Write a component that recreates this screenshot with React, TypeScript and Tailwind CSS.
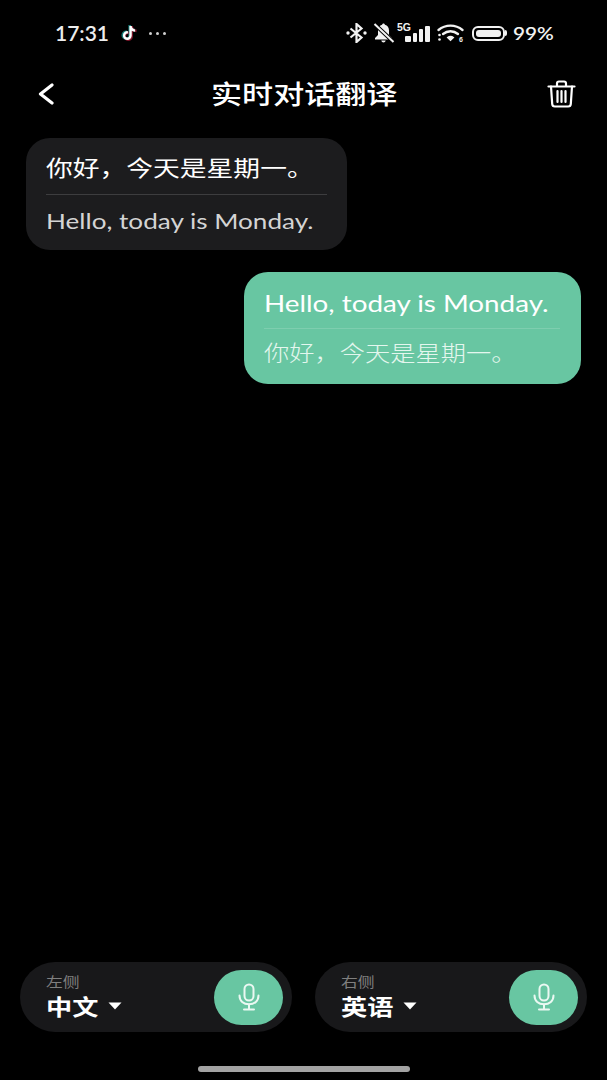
import React from "react";
import { FaTiktok } from "react-icons/fa";

function Stretch({ className, children }: { className: string; children: React.ReactNode }) {
  return <span className={`block origin-left whitespace-nowrap ${className}`}>{children}</span>;
}

function Bubble({ dark, first, second }: { dark: boolean; first: string; second: string }) {
  const zhDark = "font-['Noto_Sans_CJK_SC',sans-serif] text-[21.5px] scale-x-[1.245] leading-[26px]";
  const enDark = "font-['Lato',sans-serif] text-[22px] scale-x-[1.187] leading-[26px]";
  const zhLight = "font-['Noto_Sans_CJK_SC',sans-serif] font-light text-[21.5px] scale-x-[1.175] leading-[26px]";
  const enLight = "font-['Lato',sans-serif] text-[23px] scale-x-[1.208] leading-[26px]";
  return (
    <div
      className={
        dark
          ? "w-[321px] h-[112px] rounded-[24px] bg-[#1c1c1e] pl-[20px] pr-[20px] flex flex-col self-start ml-[26px]"
          : "w-[337px] h-[112px] rounded-[24px] bg-[#68c6a2] pl-[20px] pr-[21px] flex flex-col self-end mr-[26px]"
      }
    >
      <div className={`h-[57px] flex items-center border-b border-[#ffffff26] ${dark ? "pt-[2px]" : "pt-[5px]"}`}>
        <Stretch className={`${dark ? zhDark : enLight} text-white`}>{first}</Stretch>
      </div>
      <div className={`flex-1 flex items-center ${dark ? "pb-[3px]" : "pb-[9px]"}`}>
        <Stretch className={`${dark ? enDark : zhLight} ${dark ? "text-[#d4d4d4]" : "text-[#e4f6ee]"}`}>{second}</Stretch>
      </div>
    </div>
  );
}

function Mic() {
  return (
    <svg width="24" height="28" viewBox="0 0 24 28" preserveAspectRatio="none" fill="none" stroke="#eaf8f2" strokeWidth="2" strokeLinecap="round" strokeLinejoin="round">
      <rect x="7.500" y="1.500" width="9" height="16" rx="4.500" />
      <path d="M2.500 12.500c0 5.500 4 8.800 9.500 8.800s9.500-3.300 9.500-8.800" />
      <path d="M12 21.500v5M7 26.500h10" />
    </svg>
  );
}

function Pill({ label, value }: { label: string; value: string }) {
  return (
    <div className="w-[272px] h-[70px] rounded-full bg-[#18181a] flex items-center pl-[26px] pr-[9px]">
      <div className="flex-1 flex flex-col pb-[3px] font-['Noto_Sans_CJK_SC',sans-serif]">
        <Stretch className="text-[14px] leading-[18px] scale-x-[1.2] text-[#7f7f7f]">{label}</Stretch>
        <div className="flex items-center h-[30px]">
          <Stretch className="w-[62px] text-[22px] leading-[28px] scale-x-[1.19] font-bold text-white">{value}</Stretch>
          <svg width="14" height="8" viewBox="0 0 14 8" className="mt-[3px]"><path d="M0.500 0.500h13L7 7.500z" fill="#fff" /></svg>
        </div>
      </div>
      <div className="w-[69px] h-[55px] rounded-full bg-[#68c6a2] flex items-center justify-center">
        <Mic />
      </div>
    </div>
  );
}

function StatusIcons() {
  return (
    <div className="flex items-center text-[#f2f2f2]">
      <svg width="21" height="20" viewBox="0 0 21 20" fill="none" stroke="currentColor" strokeWidth="2.200" className="mr-[6px]">
        <path d="M4.500 5.500l11 9-5 4.500V1l5 4.500-11 9" />
        <circle cx="2" cy="10" r="1.700" fill="currentColor" stroke="none" />
        <circle cx="19" cy="10" r="1.700" fill="currentColor" stroke="none" />
      </svg>
      <svg width="22" height="20" viewBox="0 0 22 20" className="mr-[2px]">
        <path d="M10.500 .500c-.8 0-1.300.6-1.400 1.300C6.500 2.500 5 4.800 5 7.500V12L2 15v1.500h17V15l-3-3V7.500c0-2.700-1.500-5-4.100-5.700C11.800 1.100 11.300 .500 10.500 .500zM8.300 17.500c.2 1.200 1.200 2 2.200 2s2-.8 2.200-2z" fill="currentColor" />
        <path d="M1.500 1L20.500 19" stroke="#000" strokeWidth="4" />
        <path d="M1.500 1L20.500 19" stroke="currentColor" strokeWidth="2" />
      </svg>
      <div className="relative w-[34px] h-[18px] mr-[6px]">
        <span className="absolute left-0 top-[-2px] text-[10.5px] leading-[10px] font-bold font-['Liberation_Sans',sans-serif]">5G</span>
        <div className="absolute left-[8px] bottom-0 flex items-end gap-[2px]">
          <span className="w-[6px] h-[6px] bg-current rounded-[1px]" />
          <span className="w-[4px] h-[9px] bg-current rounded-[1px]" />
          <span className="w-[4px] h-[13px] bg-current rounded-[1px]" />
          <span className="w-[5px] h-[16px] bg-current rounded-[1px]" />
        </div>
      </div>
      <svg width="28" height="18" viewBox="0 0 28 18" fill="none" stroke="currentColor" strokeLinecap="round" className="mr-[7px]">
        <path d="M1.500 6C8.500 .2 18.500 .2 25.500 6" strokeWidth="2.300" />
        <path d="M6 10c4.500-3.700 10.500-3.700 15 0" strokeWidth="2.300" />
        <path d="M10.500 13.500c2-1.500 4-1.500 6 0l-3 3z" fill="currentColor" strokeWidth="1.200" />
        <circle cx="2.500" cy="11" r="1.300" fill="currentColor" stroke="none" />
        <circle cx="2.500" cy="15.500" r="1.300" fill="currentColor" stroke="none" />
        <text x="22" y="17.500" fontSize="7" fontWeight="700" fill="currentColor" stroke="none" fontFamily="Liberation Sans">6</text>
      </svg>
      <div className="relative w-[33px] h-[15px] rounded-[6px] border-2 border-current p-[2px] mr-[8px]">
        <div className="w-full h-full rounded-[3px] bg-current" />
        <span className="absolute right-[-4px] top-[2.500px] w-[2px] h-[6px] rounded-r bg-current" />
      </div>
      <span className="w-[40px] font-['Lato',sans-serif] font-semibold text-[18px] leading-[22px] scale-x-[1.15] origin-left">99%</span>
    </div>
  );
}

export default function App() {
  return (
    <div className="w-[607px] h-[1080px] bg-black overflow-hidden flex flex-col text-white">
      <div className="h-[66px] flex items-center justify-between pl-[55px] pr-[54px]">
        <div className="flex items-center">
          <span className="w-[66px] font-['Lato',sans-serif] font-semibold text-[21px] leading-[26px] text-[#ededed]">17:31</span>
          <span className="relative w-[16px] h-[14px] mr-[12px]">
            <FaTiktok className="absolute left-[-1px] top-[-1px] w-[16px] h-[15px] text-[#25f4ee] opacity-50" />
            <FaTiktok className="absolute left-[1px] top-0 w-[16px] h-[15px] text-[#fe2c55] opacity-50" />
            <FaTiktok className="absolute left-0 top-0 w-[16px] h-[14px] text-white" />
          </span>
          <span className="flex gap-[4px]">
            <span className="w-[3px] h-[3px] rounded-full bg-[#cfcfcf]" />
            <span className="w-[3px] h-[3px] rounded-full bg-[#cfcfcf]" />
            <span className="w-[3px] h-[3px] rounded-full bg-[#cfcfcf]" />
          </span>
        </div>
        <StatusIcons />
      </div>

      <div className="h-[56px] flex items-center pl-[38px] pr-[31px]">
        <svg width="16" height="22" viewBox="0 0 16 22" fill="none" stroke="#fff" strokeWidth="3.200" strokeLinecap="round" strokeLinejoin="round">
          <path d="M14 2L2.500 11 14 20" />
        </svg>
        <span className="ml-[157px] mr-auto -mt-[2px] font-['Noto_Sans_CJK_SC',sans-serif] font-medium text-[26px] leading-[34px] scale-x-[1.195] origin-left whitespace-nowrap">实时对话翻译</span>
        <svg width="29" height="28" viewBox="0 0 29 28" fill="none" stroke="#fff" strokeWidth="2.200" strokeLinecap="round" strokeLinejoin="round">
          <path d="M1.500 6.500h26" />
          <path d="M10 6V3.500c0-1 .8-2 2-2h5c1.200 0 2 1 2 2V6" />
          <path d="M4 6.500l1.200 17.500c.1 1.500 1.200 2.500 2.600 2.500h13.400c1.400 0 2.500-1 2.600-2.500L25 6.500" />
          <path d="M10.500 11v11M14.500 11v11M18.500 11v11" />
        </svg>
      </div>

      <div className="flex flex-col gap-[22px] pt-[16px]">
        <Bubble dark first="你好，今天是星期一。" second="Hello, today is Monday." />
        <Bubble dark={false} first="Hello, today is Monday." second="你好，今天是星期一。" />
      </div>

      <div className="flex-1" />

      <div className="flex justify-between pl-[20px] pr-[20px]">
        <Pill label="左侧" value="中文" />
        <Pill label="右侧" value="英语" />
      </div>
      <div className="h-[48px] flex items-end justify-center pb-[8px]">
        <div className="w-[212px] h-[6px] rounded-full bg-[#a3a3a3]" />
      </div>
    </div>
  );
}
